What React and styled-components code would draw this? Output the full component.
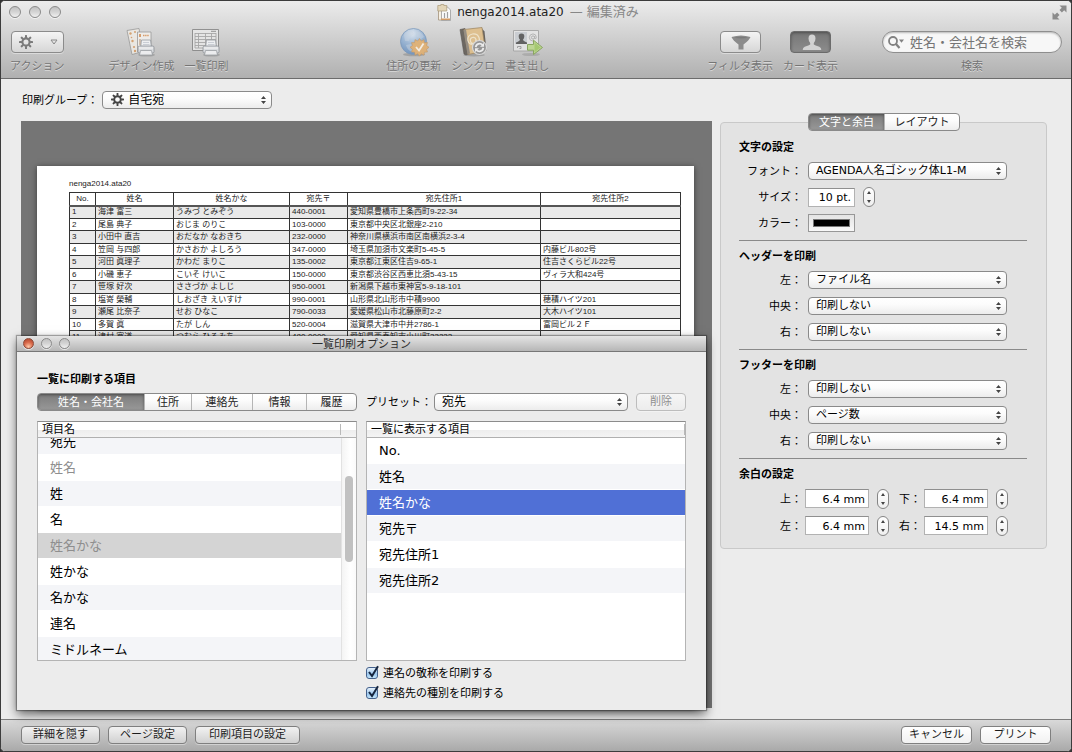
import React, { useLayoutEffect, useRef, useState } from "react";
import styled, { createGlobalStyle, css } from "styled-components";

const GlobalStyle = createGlobalStyle`
  *, *::before, *::after {
    box-sizing: border-box;
  }

  body {
    margin: 0;
    background: #333;
    color: #000;
    font-family: "DejaVu Sans", "Noto Sans CJK JP", sans-serif;
    font-size: 11px;
    line-height: 16px;
  }

  button, input, select {
    margin: 0;
    font-family: inherit;
    font-size: 11px;
    color: inherit;
  }
`;

const Window = styled.div`
  display: flex;
  flex-direction: column;
  min-height: 100vh;
  border: 1px solid #3c3c3c;
  border-radius: 5px;
  background: #ececec;
  overflow: hidden;
`;

/* ---------- header ---------- */

const Header = styled.header`
  background: linear-gradient(#ececec, #d4d4d4 40%, #b0b0b0);
  border-bottom: 1px solid #6c6c6c;
`;

const TitleBar = styled.div`
  display: grid;
  grid-template-columns: 1fr auto 1fr;
  align-items: center;
  height: 22px;
  padding: 0 4px 0 8px;
`;

const Lights = styled.div`
  display: flex;
  gap: ${props => (props.$small ? 7 : 8)}px;
`;

const Light = styled.button`
  width: ${props => (props.$small ? 11 : 12)}px;
  height: ${props => (props.$small ? 11 : 12)}px;
  padding: 0;
  border: 1px solid ${props => (props.$active ? "#8d4a38" : "#8a8a8a")};
  border-radius: 50%;
  background: ${props =>
    props.$active
      ? "radial-gradient(circle at 50% 85%, #ffc9a8, #d9694a 50%, #a8412a)"
      : "linear-gradient(#c2c2c2, #d4d4d4 50%, #f0f0f0)"};
  box-shadow: 0 1px 0 rgba(255, 255, 255, 0.6);
`;

const Title = styled.h1`
  display: flex;
  align-items: center;
  gap: 6px;
  margin: 0;
  font-size: 12px;
  font-weight: normal;
  color: #222;
`;

const Edited = styled.span`
  font-size: 13px;
  color: #878787;
`;

const FullScreen = styled.button`
  justify-self: end;
  display: flex;
  padding: 0;
  border: 0;
  background: none;
`;

const Toolbar = styled.div`
  display: flex;
  padding: 3px 9px 2px;
`;

const Tools = styled.div`
  display: flex;
  gap: 10px;
  margin-left: ${props => props.$indent || 0}px;
`;

const Spacer = styled.div`
  flex: 1;
`;

const Tool = styled.div`
  display: flex;
  flex-direction: column;
  align-items: center;
  color: #757575;
  text-shadow: 0 1px 0 rgba(255, 255, 255, 0.5);
`;

const ToolFace = styled.span`
  display: flex;
  align-items: center;
  height: 32px;
`;

const ToolText = styled.span`
  line-height: 18px;
  white-space: nowrap;
`;

const ToolAction = styled.button`
  display: flex;
  flex-direction: column;
  align-items: center;
  padding: 0;
  border: 0;
  background: none;
  text-shadow: inherit;
`;

const Bezel = styled.span`
  display: flex;
  align-items: center;
  justify-content: ${props => (props.$wide ? "space-between" : "center")};
  width: ${props => (props.$wide ? 53 : 41)}px;
  height: 22px;
  padding: 0 5px 0 7px;
  border: 1px solid ${props => (props.$pressed ? "#6b6b6b" : "#8b8b8b")};
  border-radius: 4px;
  background: ${props =>
    props.$pressed
      ? "linear-gradient(#767676, #8c8c8c)"
      : "linear-gradient(#f4f4f4, #d6d6d6)"};
  box-shadow: ${props =>
    props.$pressed
      ? "inset 0 1px 3px rgba(0, 0, 0, 0.35)"
      : "0 1px 0 rgba(255, 255, 255, 0.4)"};
`;

const SearchBox = styled.div`
  display: flex;
  align-items: center;
  width: 180px;
  height: 22px;
  padding-left: 5px;
  border: 1px solid #8e8e8e;
  border-radius: 11px;
  background: #f7f7f7;
  box-shadow: inset 0 1px 2px rgba(0, 0, 0, 0.25);
`;

const SearchInput = styled.input`
  flex: 1;
  min-width: 0;
  height: 20px;
  padding: 0 8px 0 6px;
  border: 0;
  outline: 0;
  background: none;
  font-size: 13px;

  &::placeholder {
    color: #757575;
    opacity: 1;
  }
`;

/* ---------- shared controls ---------- */

const PushButton = styled.button`
  flex: none;
  width: ${props => props.$width}px;
  height: 18px;
  padding: 0;
  border: 1px solid ${props => (props.disabled ? "#bdbdbd" : "#7f7f7f")};
  border-radius: 4px;
  background: ${props =>
    props.disabled
      ? "linear-gradient(#f6f6f6, #ececec)"
      : props.$metal
      ? "linear-gradient(#f2f2f2, #d0d0d0)"
      : "linear-gradient(#fff, #f1f1f1)"};
  line-height: 16px;
  color: ${props => (props.disabled ? "#8f8f8f" : "#1c1c1c")};
  box-shadow: 0 1px 0 rgba(255, 255, 255, 0.4);
`;

const SelectWrap = styled.span`
  position: relative;
  display: flex;
  flex: ${props => (props.$width ? "none" : 1)};
  width: ${props => (props.$width ? props.$width + "px" : "auto")};
`;

const SelectBox = styled.select`
  appearance: none;
  width: 100%;
  height: 18px;
  padding: 0 20px 0 ${props => (props.$icon ? 25 : 7)}px;
  border: 1px solid #8a8a8a;
  border-radius: 4px;
  background: linear-gradient(#fff, #fcfcfc 40%, #ececec);
  font-size: ${props => (props.$large ? 12 : 11)}px;
  line-height: 16px;
`;

const SelectArrows = styled.svg`
  position: absolute;
  right: 6px;
  top: 5px;
  pointer-events: none;
`;

const SelectIcon = styled.span`
  position: absolute;
  left: 9px;
  top: 2px;
  display: flex;
  pointer-events: none;
`;

const Segments = styled.div`
  display: flex;
  width: ${props => (props.$fit ? "max-content" : "auto")};
  height: 18px;
  border: 1px solid #8a8a8a;
  border-radius: 4px;
  background: linear-gradient(#fff, #fcfcfc 40%, #ededed);
  overflow: hidden;
`;

const Segment = styled.button`
  flex: ${props => props.$size} 1 ${props => props.$size}px;
  padding: 2px 0 0;
  border: 0;
  background: none;
  line-height: 14px;
  color: #222;

  & + & {
    border-left: 1px solid #b5b5b5;
  }

  ${props =>
    props.$on &&
    css`
      background: linear-gradient(#7c7c7c, #989898);
      box-shadow: inset 0 1px 3px rgba(0, 0, 0, 0.4);
      color: #fff;
    `}
`;

const TextField = styled.input`
  width: ${props => props.$width}px;
  height: 19px;
  padding: 1px 3px 0;
  border: 1px solid #b2b2b2;
  border-top-color: #8f8f8f;
  background: #fff;
  text-align: right;
`;

const StepperBox = styled.span`
  display: flex;
  flex-direction: column;
  width: 12px;
  height: 20px;
  margin-left: 8px;
  border: 1px solid #858585;
  border-radius: 6px;
  background: linear-gradient(#fff, #efefef);
`;

const StepButton = styled.button`
  display: flex;
  flex: 1;
  align-items: center;
  justify-content: center;
  padding: 0;
  border: 0;
  background: none;
`;

const Caption = styled.label`
  padding-top: 2px;
  white-space: nowrap;
`;

/* ---------- main area ---------- */

const Main = styled.main`
  display: flex;
  flex: 1;
  flex-direction: column;
  padding: 12px 24px 11px 20px;
`;

const GroupRow = styled.div`
  display: flex;
  align-items: center;
  gap: 4px;
  height: 18px;
  margin: 0 0 12px 1px;
`;

const Columns = styled.div`
  display: grid;
  flex: 1;
  grid-template-columns: minmax(0, 1fr) 327px;
  align-items: start;
  gap: 8px;
`;

const PreviewColumn = styled.div`
  position: relative;
  display: flex;
  align-self: stretch;
  min-height: 560px;
`;

const Preview = styled.div`
  display: flex;
  flex: 1;
  min-width: 0;
  padding: 45px 18px 0 16px;
  background: #757575;
`;

const Page = styled.section`
  flex: 1;
  min-width: 0;
  padding: 13px 13px 0 32px;
  background: #fff;
  box-shadow: 0 1px 6px rgba(0, 0, 0, 0.5);
  font-family: "Liberation Sans", "Noto Sans CJK JP", sans-serif;
  font-size: 8px;
  line-height: 10px;
  color: #222;
`;

const PageHead = styled.p`
  margin: 0 0 3px;
`;

const PageTable = styled.table`
  width: 100%;
  table-layout: fixed;
  border-collapse: collapse;

  th, td {
    height: 12px;
    padding: 0 2px;
    border: 1px solid #333;
    font-weight: normal;
    line-height: 10px;
    text-align: left;
    white-space: nowrap;
    overflow: hidden;
  }

  th {
    height: 13px;
    border-bottom: 2px solid #555;
    text-align: center;
  }

  tbody tr:nth-child(odd) td {
    height: 13px;
    background: #e9e9e9;
  }
`;

/* ---------- print option window ---------- */

const Dialog = styled.section`
  position: absolute;
  left: -4px;
  right: 6px;
  bottom: -2px;
  background: #ececec;
  box-shadow: 0 0 1px 1px rgba(0, 0, 0, 0.3), 0 4px 10px rgba(0, 0, 0, 0.6);
`;

const DialogBar = styled.div`
  display: grid;
  grid-template-columns: 1fr auto 1fr;
  align-items: center;
  height: 16px;
  padding: 0 6px;
  border-bottom: 1px solid #777;
  background: linear-gradient(#e4e4e4, #b6b6b6);
`;

const DialogTitle = styled.h2`
  margin: 0;
  padding-top: 2px;
  font-size: 11px;
  font-weight: normal;
  line-height: 13px;
  color: #2b2b2b;
`;

const DialogBody = styled.div`
  padding: 18px 20px 7px;
`;

const Heading = styled.h3`
  margin: 0;
  padding-top: 2px;
  font-size: 11px;
  font-weight: bold;
  line-height: ${props => (props.$tall ? 20 : 16)}px;
`;

const DialogColumns = styled.div`
  display: grid;
  grid-template-columns: 1fr 1fr;
  align-items: start;
  gap: 10px 9px;
  margin-top: 5px;
`;

const PresetRow = styled.div`
  display: flex;
  align-items: center;
  gap: 2px;
  height: 18px;

  button {
    margin-left: 6px;
  }
`;

const ListFrame = styled.div`
  height: 240px;
  border: 1px solid #b4b4b4;
  border-top-color: #8c8c8c;
  background: #fff;
`;

const ListHead = styled.div`
  display: flex;
  height: 16px;
  padding: 0 0 0 4px;
  border-bottom: 1px solid #b0b0b0;
  background: linear-gradient(#fff 50%, #ededed 50%, #f4f4f4);
  line-height: 16px;
`;

const HeadText = styled.span`
  flex: 1;
`;

const HeadEnd = styled.span`
  width: ${props => props.$width}px;
  margin: 2px 0;
  border-left: 1px solid #b9b9b9;
`;

const ListBody = styled.div`
  display: flex;
  height: 222px;
`;

const List = styled.ul`
  flex: 1;
  margin: 0;
  padding: 0;
  list-style: none;
  overflow: hidden;
`;

const Item = styled.li`
  height: 26px;
  padding-left: 12px;
  border-bottom: 1px solid transparent;
  background-clip: padding-box;
  font-size: 13px;
  line-height: 26px;
  color: ${props => (props.$dim ? "#8e8e8e" : "#000")};
  background-color: ${props => (props.$striped ? "#f4f5f8" : "#fff")};

  ${props =>
    props.$mark === "inactive" &&
    css`
      background-color: #d4d4d4;
    `}

  ${props =>
    props.$mark === "active" &&
    css`
      background-color: #5070d6;
      color: #fff;
    `}
`;

const ScrollTrack = styled.div`
  width: 15px;
  padding: 38px 3px 0;
  border-left: 1px solid #e2e2e2;
  background: linear-gradient(90deg, #f4f4f4, #fff 60%, #fafafa);
`;

const ScrollThumb = styled.div`
  width: 8px;
  height: 86px;
  border-radius: 4px;
  background: #c1c1c1;
`;

const Checks = styled.div`
  grid-column: 2;
  margin-top: -8px;
`;

const CheckLabel = styled.label`
  display: flex;
  align-items: center;
  gap: 5px;
  height: 20px;
`;

const CheckWrap = styled.span`
  position: relative;
  display: flex;
`;

const CheckInput = styled.input`
  appearance: none;
  width: 12px;
  height: 12px;
  border: 1px solid #44618c;
  border-radius: 3px;
  background: linear-gradient(#e6f1fb, #9cc7ee 60%, #c4e6fb);

  &:not(:checked) + svg {
    display: none;
  }
`;

const CheckMark = styled.svg`
  position: absolute;
  left: 1px;
  top: -2px;
  pointer-events: none;
`;

/* ---------- settings panel ---------- */

const Panel = styled.aside`
  margin-top: 1px;
  padding: 0 19px 9px 18px;
  border: 1px solid #c9c9c9;
  border-radius: 4px;
  background: #e3e3e3;
`;

const PanelTabs = styled.div`
  display: flex;
  justify-content: center;
  margin: -10px 0 5px;
  padding-left: 2px;
`;

const Divider = styled.hr`
  height: 1px;
  margin: 4px 0;
  border: 0;
  background: #8a8a8a;
`;

const Field = styled.div`
  display: flex;
  align-items: center;
  height: ${props => (props.$tall ? 27 : 26)}px;
`;

const FieldLabel = styled(Caption)`
  width: ${props => (props.$second ? 32 : 63)}px;
  margin-right: ${props => (props.$tight ? 3 : 6)}px;
  text-align: right;
`;

const ColorWell = styled.input`
  appearance: none;
  width: 47px;
  height: 18px;
  padding: 4px;
  border: 1px solid #979797;
  background: linear-gradient(#e4e4e4, #f8f8f8);

  &::-webkit-color-swatch-wrapper {
    padding: 0;
  }

  &::-webkit-color-swatch {
    border: 1px solid #777;
    border-radius: 0;
  }
`;

/* ---------- footer ---------- */

const Footer = styled.footer`
  display: flex;
  gap: 8px;
  height: 32px;
  padding: 6px 20px 0;
  border-top: 1px solid #7d7d7d;
  background: linear-gradient(#d9d9d9, #a9a9a9);
`;

/* ---------- icons ---------- */

const PictureIcon = styled.svg`
  opacity: 0.85;
`;

const Gear = ({ size, color }) => (
  <svg width={size} height={size} viewBox="0 0 14 14" aria-hidden="true">
    {[0, 45, 90, 135].map(angle => (
      <g key={angle} fill={color} transform={`rotate(${angle} 7 7)`}>
        <rect x="6" y="0" width="2" height="3" rx="0.6" />
        <rect x="6" y="11" width="2" height="3" rx="0.6" />
      </g>
    ))}
    <circle cx="7" cy="7" r="3.6" fill="none" stroke={color} strokeWidth="2.1" />
  </svg>
);

const Printer = () => (
  <g>
    <ellipse cx="20.5" cy="27" rx="8.5" ry="1.6" fill="#777" opacity="0.45" />
    <path d="M15.5 12h9l1 8h-11z" fill="#f4f6f8" stroke="#8d9298" strokeWidth="0.8" />
    <path d="M17 14.5h6M17 16.5h6.5" stroke="#b7bfc8" strokeWidth="0.7" />
    <path d="M12 19.5q0-1.5 1.5-1.5h13q1.5 0 1.5 1.5v4q0 1.5-1.5 1.5h-13q-1.5 0-1.5-1.5z" fill="#dde0e4" stroke="#83888e" strokeWidth="0.8" />
    <path d="M13 20h14" stroke="#fff" strokeWidth="1" />
    <path d="M14.5 22.500h11l1 4.500h-13z" fill="#f3f4f6" stroke="#92979c" strokeWidth="0.8" />
  </g>
);

const DesignIcon = () => (
  <PictureIcon width="30" height="29" viewBox="0 0 30 29" aria-hidden="true">
    <path d="M1 2.5l12-2 4 23-11 3z" fill="#efece6" stroke="#8f8f8f" strokeWidth="0.8" />
    <g fill="#d59a63">
      <circle cx="4.5" cy="5.5" r="1.2" />
      <circle cx="9" cy="4" r="1" />
      <circle cx="6.5" cy="13" r="1.2" />
      <circle cx="8" cy="19" r="1.1" />
      <circle cx="9" cy="23" r="1.2" />
      <circle cx="5.5" cy="9.5" r="0.8" />
    </g>
    <path d="M11.5 4h13.500v20h-13.500z" fill="#f4f2ee" stroke="#8f8f8f" strokeWidth="0.8" />
    <rect x="13" y="6" width="2" height="3" fill="#d9955c" />
    <path d="M17 7.5h6" stroke="#d9955c" strokeWidth="1.5" strokeDasharray="1.5 0.6" />
    <path d="M14 11v6" stroke="#c6a98d" strokeWidth="1.5" />
    <Printer />
  </PictureIcon>
);

const SheetIcon = () => (
  <PictureIcon width="30" height="29" viewBox="0 0 30 29" aria-hidden="true">
    <path d="M1.5 1.500h26v21h-26z" fill="#e9e9e9" stroke="#858585" />
    <path d="M4 5.500h21M4 8.500h21M4 11.500h21M4 14.500h21M4 17.500h21M4 20h21" stroke="#a0a0a0" strokeWidth="0.9" />
    <path d="M4 5v15M7.500 5v15M14.500 5v15M20.500 5v15M25 5v15" stroke="#a0a0a0" strokeWidth="0.9" />
    <path d="M20 3.300h5" stroke="#888" strokeWidth="1" />
    <Printer />
  </PictureIcon>
);

const GlobeIcon = () => (
  <PictureIcon width="30" height="30" viewBox="0 0 30 30" aria-hidden="true">
    <defs>
      <radialGradient id="globe" cx="0.45" cy="0.2" r="0.85">
        <stop offset="0" stopColor="#dfe9f4" />
        <stop offset="0.45" stopColor="#98b5d6" />
        <stop offset="1" stopColor="#5f89bb" />
      </radialGradient>
    </defs>
    <ellipse cx="15" cy="27.5" rx="11" ry="1.8" fill="#777" opacity="0.5" />
    <circle cx="14.5" cy="14.5" r="13" fill="url(#globe)" stroke="#6e91b8" strokeWidth="0.8" />
    <path d="M5 8q3-5 8-4l2 3-4 3-1 4-4 0zM17 4q6 1 8 6l-3 2-4-2zM7 18l5-1 3 3-2 5q-5-2-6-7z" fill="#c5d4e4" opacity="0.5" />
    <polygon
      points="20.5,11.5 22.3,14 25,12.6 25.4,15.6 28.5,15.6 27.6,18.5 30,20.3 27.6,22.2 28.5,25 25.4,25.2 25,28.2 22.3,26.8 20.5,29.2 18.7,26.8 16,28.2 15.6,25.2 12.5,25 13.4,22.2 11,20.3 13.4,18.5 12.5,15.6 15.6,15.6 16,12.6 18.7,14"
      fill="#e2ae6c"
      stroke="#b98a55"
      strokeWidth="0.5"
    />
    <path d="M17 20l3 3.500 4.500-7" fill="none" stroke="#fbf3e6" strokeWidth="1.8" />
  </PictureIcon>
);

const BookIcon = () => (
  <PictureIcon width="30" height="30" viewBox="0 0 30 30" aria-hidden="true">
    <ellipse cx="16" cy="28" rx="11" ry="1.5" fill="#777" opacity="0.5" />
    <path d="M2 2.500l5-1 5 24.500-4 2-2-1z" fill="#5d5750" stroke="#47423d" strokeWidth="0.6" />
    <path d="M24 1.500l2.500 3 2 19-2 1z" fill="#55504b" />
    <path d="M6 2.500l18-2 3.500 23.500-17.500 3.500z" fill="#e0bd85" stroke="#8f7449" strokeWidth="0.7" />
    <path d="M5.500 3l2.500-.5 4 24-2.500.8z" fill="#8c8377" />
    <path d="M17.800 12.700a2.800 3 0 1 1-3.400-2.200q3-.6 3.500 2l.4 1.800q.5 1.500 1.800 1 2-1.200 1-4.500-1.600-4.500-6.600-3.800-5.400 1.300-4.600 6.300.9 4 4.700 4" fill="none" stroke="#f4e7ca" strokeWidth="1.2" />
    <circle cx="21.5" cy="20.5" r="7" fill="#8e8e8e" stroke="#dcdcdc" strokeWidth="1.2" />
    <path d="M17.700 20.200a4 4 0 0 1 7-2.200M25.300 20.800a4 4 0 0 1-7 2.200" fill="none" stroke="#f2f2f2" strokeWidth="1.8" />
    <path d="M26 15.800v4h-4zM17 25.200v-4h4z" fill="#f2f2f2" />
  </PictureIcon>
);

const ExportIcon = () => (
  <PictureIcon width="32" height="30" viewBox="0 0 32 30" aria-hidden="true">
    <ellipse cx="20" cy="27.5" rx="9" ry="1.6" fill="#777" opacity="0.35" />
    <path d="M2.5 3.500h25v20.500h-25z" fill="#e6e6e6" stroke="#a2a2a2" />
    <rect x="4" y="5" width="12" height="12" fill="#c9cdd2" />
    <path d="M10.500 6.500q3 0 2.800 3.300-.3 2-1.300 3 0 1.200 4 2.700v1.500h-11v-1.500q4-1.500 4-2.700-1.200-1-1.300-3-.2-3.300 2.800-3.300z" fill="#505050" />
    <circle cx="22" cy="10.5" r="1.6" fill="none" stroke="#aaa" />
    <path d="M23.700 9v2.500q1.600.8 1.700-1-.2-3.500-3.400-3.600-3.600.2-3.700 3.700.3 3.300 3.700 3.500" fill="none" stroke="#aaa" strokeWidth="0.9" />
    <path d="M6.500 21v-1.500h3.500v2h-1.500" fill="none" stroke="#999" />
    <path d="M16.500 17.500h6v-4.300l9 7.300-9 7v-4.300h-6z" fill="#bcd98a" stroke="#7fa04f" />
    <path d="M23.500 15.500l6 5-6 4.700z" fill="#98c558" opacity="0.8" />
  </PictureIcon>
);

const FunnelIcon = () => (
  <svg width="20" height="15" viewBox="0 0 20 15" aria-hidden="true">
    <path d="M.5 2q9.500-3 19 0-1.500 3.500-7 7.500v5h-5v-5q-5.500-4-7-7.500z" fill="#8b8b8b" />
    <path d="M3 2.700q7-1.800 14 0-7 1.400-14 0z" fill="#7a7a7a" />
  </svg>
);

const PersonIcon = () => (
  <svg width="20" height="17" viewBox="0 0 20 17" aria-hidden="true">
    <path d="M10 .5q3.500 0 3.500 4 0 2.500-1.700 4.500v1.500q1 1 5.500 2.300 2 .7 2 3.200h-18.600q0-2.500 2-3.200 4.500-1.300 5.500-2.300v-1.500q-1.700-2-1.700-4.500 0-4 3.500-4z" fill="#d2d2d2" />
  </svg>
);

const DocIcon = () => (
  <svg width="14" height="17" viewBox="0 0 14 17" aria-hidden="true">
    <path d="M1.500 5.500h8.500v10.500h-8.500z" fill="#f6efe2" stroke="#a3927b" strokeWidth="0.8" />
    <path d="M4.500 3h6l3 3v10.500h-9z" fill="#fbfbfb" stroke="#9b9b9b" strokeWidth="0.8" />
    <path d="M.8 1.500h3v-1h3v1h3v5.500h-9z" fill="#e3d6b8" stroke="#a79877" strokeWidth="0.7" />
    <path d="M7.500 9v5M10.500 8v6" stroke="#a0a0a0" strokeWidth="1.2" />
    <path d="M4 15.200h9" stroke="#d39c66" strokeWidth="1.6" />
  </svg>
);

const ExpandIcon = () => (
  <svg width="15" height="15" viewBox="0 0 15 15" aria-hidden="true">
    <path d="M7.500.5h7v7l-2.300-2.300-2.300 2.300-2.400-2.400 2.300-2.300z" fill="#8b8b8b" />
    <path d="M7.500 14.500h-7v-7l2.300 2.300 2.300-2.300 2.400 2.400-2.300 2.300z" fill="#8b8b8b" />
  </svg>
);

const SearchIcon = () => (
  <svg width="16" height="14" viewBox="0 0 16 14" aria-hidden="true">
    <circle cx="5" cy="6" r="4" fill="none" stroke="#828282" strokeWidth="1.8" />
    <path d="M8 9l3.500 4" stroke="#828282" strokeWidth="2.2" />
    <path d="M11 4.500h5l-2.500 3.200z" fill="#828282" />
  </svg>
);

/* ---------- composed controls ---------- */

const PopUp = ({ id, value, options, width, large, icon }) => {
  const [current, setCurrent] = useState(value);
  return (
    <SelectWrap $width={width}>
      {icon && <SelectIcon>{icon}</SelectIcon>}
      <SelectBox
        id={id}
        value={current}
        onChange={e => setCurrent(e.target.value)}
        $large={large}
        $icon={Boolean(icon)}
      >
        {(options || [value]).map(option => (
          <option key={option}>{option}</option>
        ))}
      </SelectBox>
      <SelectArrows width="5" height="8" viewBox="0 0 5 8">
        <path d="M0 3l2.500-3L5 3zM0 5l2.500 3L5 5z" fill="#444" />
      </SelectArrows>
    </SelectWrap>
  );
};

const Stepper = ({ name }) => (
  <StepperBox>
    <StepButton aria-label={name + "を増やす"}>
      <svg width="4" height="3" viewBox="0 0 4 3">
        <path d="M0 3l2-3 2 3z" fill="#444" />
      </svg>
    </StepButton>
    <StepButton aria-label={name + "を減らす"}>
      <svg width="4" height="3" viewBox="0 0 4 3">
        <path d="M0 0l2 3 2-3z" fill="#444" />
      </svg>
    </StepButton>
  </StepperBox>
);

const SegmentedControl = ({ items, fit }) => {
  const [active, setActive] = useState(items[0].label);
  return (
    <Segments $fit={fit}>
      {items.map(item => (
        <Segment
          key={item.label}
          $size={item.size}
          $on={item.label === active}
          style={fit ? { width: item.size } : undefined}
          onClick={() => setActive(item.label)}
        >
          {item.label}
        </Segment>
      ))}
    </Segments>
  );
};

const CheckBox = ({ id, children }) => (
  <CheckLabel as="div">
    <CheckWrap>
      <CheckInput id={id} type="checkbox" defaultChecked />
      <CheckMark width="12" height="13" viewBox="0 0 12 13">
        <path d="M2 7l3 4L11 1.200" fill="none" stroke="#16263f" strokeWidth="2" />
      </CheckMark>
    </CheckWrap>
    <Caption htmlFor={id}>{children}</Caption>
  </CheckLabel>
);

const PictureTool = ({ icon, children }) => (
  <Tool>
    <ToolAction>
      <ToolFace>{icon}</ToolFace>
      <ToolText>{children}</ToolText>
    </ToolAction>
  </Tool>
);

/* ---------- data ---------- */

const people = [
  ["1", "海津 富三", "うみづ とみぞう", "440-0001", "愛知県豊橋市上条西町9-22-34", ""],
  ["2", "尾島 典子", "おじま のりこ", "103-0000", "東京都中央区北銀座2-210", ""],
  ["3", "小田中 直吉", "おだなか なおきち", "232-0000", "神奈川県横浜市南区南横浜2-3-4", ""],
  ["4", "笠岡 与四郎", "かさおか よしろう", "347-0000", "埼玉県加須市文楽町5-45-5", "内藤ビル802号"],
  ["5", "河田 眞理子", "かわだ まりこ", "135-0002", "東京都江東区住吉9-65-1", "住吉さくらビル22号"],
  ["6", "小磯 恵子", "こいそ けいこ", "150-0000", "東京都渋谷区西恵比須5-43-15", "ヴィラ大和424号"],
  ["7", "笹塚 好次", "ささづか よしじ", "950-0001", "新潟県下越市東神宮5-9-18-101", ""],
  ["8", "塩嵜 榮輔", "しおざき えいすけ", "990-0001", "山形県北山形市中積9900", "穂積ハイツ201"],
  ["9", "瀬尾 比奈子", "せお ひなこ", "790-0033", "愛媛県松山市北藤原町2-2", "大木ハイツ101"],
  ["10", "多賀 眞", "たが しん", "520-0004", "滋賀県大津市中井2786-1", "富岡ビル２Ｆ"],
  ["11", "津村 寛道", "つむら ひろみち", "480-0000", "愛知県西春知市小川町33222", ""]
];

const columns = [
  { name: "No.", width: 26 },
  { name: "姓名", width: 78 },
  { name: "姓名かな", width: 116 },
  { name: "宛先〒", width: 58 },
  { name: "宛先住所1", width: 193 },
  { name: "宛先住所2" }
];

const sourceItems = [
  { text: "宛先" },
  { text: "姓名", dim: true },
  { text: "姓" },
  { text: "名" },
  { text: "姓名かな", dim: true, mark: "inactive" },
  { text: "姓かな" },
  { text: "名かな" },
  { text: "連名" },
  { text: "ミドルネーム" }
];

const shownItems = ["No.", "姓名", "姓名かな", "宛先〒", "宛先住所1", "宛先住所2"];

const printValues = ["印刷しない", "ファイル名", "ページ数"];

const Col = styled.col`
  width: ${props => (props.$width ? props.$width + "px" : "auto")};
`;

const AddressPage = () => (
  <Page>
    <PageHead>nenga2014.ata20</PageHead>
    <PageTable>
      <colgroup>
        {columns.map(column => (
          <Col key={column.name} $width={column.width} />
        ))}
      </colgroup>
      <thead>
        <tr>
          {columns.map(column => (
            <th key={column.name}>{column.name}</th>
          ))}
        </tr>
      </thead>
      <tbody>
        {people.map(person => (
          <tr key={person[0]}>
            {person.map((cell, i) => (
              <td key={i}>{cell}</td>
            ))}
          </tr>
        ))}
      </tbody>
    </PageTable>
  </Page>
);

const PrintOptions = () => {
  const list = useRef(null);
  const [selected, setSelected] = useState("姓名かな");

  useLayoutEffect(() => {
    list.current.scrollTop = 9;
  }, []);

  return (
    <Dialog>
      <DialogBar>
        <Lights $small>
          <Light $small $active aria-label="閉じる" />
          <Light $small aria-label="しまう" />
          <Light $small aria-label="拡大" />
        </Lights>
        <DialogTitle>一覧印刷オプション</DialogTitle>
      </DialogBar>
      <DialogBody>
        <Heading>一覧に印刷する項目</Heading>
        <DialogColumns>
          <SegmentedControl
            items={[
              { label: "姓名・会社名", size: 106 },
              { label: "住所", size: 47 },
              { label: "連絡先", size: 61 },
              { label: "情報", size: 54 },
              { label: "履歴", size: 50 }
            ]}
          />
          <PresetRow>
            <Caption htmlFor="preset">プリセット：</Caption>
            <PopUp id="preset" value="宛先" large />
            <PushButton $width={50} disabled>
              削除
            </PushButton>
          </PresetRow>
          <ListFrame>
            <ListHead>
              <HeadText>項目名</HeadText>
              <HeadEnd $width={16} />
            </ListHead>
            <ListBody>
              <List ref={list}>
                {sourceItems.map((item, i) => (
                  <Item key={item.text} $striped={i % 2 === 0} $dim={item.dim} $mark={item.mark}>
                    {item.text}
                  </Item>
                ))}
              </List>
              <ScrollTrack>
                <ScrollThumb />
              </ScrollTrack>
            </ListBody>
          </ListFrame>
          <ListFrame>
            <ListHead>
              <HeadText>一覧に表示する項目</HeadText>
              <HeadEnd $width={1} />
            </ListHead>
            <ListBody>
              <List>
                {shownItems.map((text, i) => (
                  <Item
                    key={text}
                    $striped={i % 2 === 1}
                    $mark={text === selected ? "active" : undefined}
                    onClick={() => setSelected(text)}
                  >
                    {text}
                  </Item>
                ))}
              </List>
            </ListBody>
          </ListFrame>
          <Checks>
            <CheckBox id="honorific">連名の敬称を印刷する</CheckBox>
            <CheckBox id="contactType">連絡先の種別を印刷する</CheckBox>
          </Checks>
        </DialogColumns>
      </DialogBody>
    </Dialog>
  );
};

const PlaceRows = ({ prefix, values }) =>
  ["左", "中央", "右"].map((place, i) => (
    <Field key={place}>
      <FieldLabel htmlFor={prefix + i}>{place}：</FieldLabel>
      <PopUp id={prefix + i} value={values[i]} options={printValues} width={199} />
    </Field>
  ));

const MarginRow = ({ items }) => (
  <Field $tall>
    {items.map((item, i) => (
      <React.Fragment key={item.id}>
        <FieldLabel htmlFor={item.id} $tight $second={i > 0}>
          {item.label}：
        </FieldLabel>
        <TextField id={item.id} $width={64} defaultValue={item.value} />
        <Stepper name={item.label} />
      </React.Fragment>
    ))}
  </Field>
);

const Settings = () => (
  <Panel>
    <PanelTabs>
      <SegmentedControl
        fit
        items={[
          { label: "文字と余白", size: 75 },
          { label: "レイアウト", size: 75 }
        ]}
      />
    </PanelTabs>
    <Heading $tall>文字の設定</Heading>
    <Field>
      <FieldLabel htmlFor="font">フォント：</FieldLabel>
      <PopUp id="font" value="AGENDA人名ゴシック体L1-M" width={199} />
    </Field>
    <Field>
      <FieldLabel htmlFor="size">サイズ：</FieldLabel>
      <TextField id="size" $width={47} defaultValue="10 pt." />
      <Stepper name="サイズ" />
    </Field>
    <Field>
      <FieldLabel htmlFor="color">カラー：</FieldLabel>
      <ColorWell id="color" type="color" defaultValue="#000000" />
    </Field>
    <Divider />
    <Heading $tall>ヘッダーを印刷</Heading>
    <PlaceRows prefix="header" values={["ファイル名", "印刷しない", "印刷しない"]} />
    <Divider />
    <Heading $tall>フッターを印刷</Heading>
    <PlaceRows prefix="footer" values={["印刷しない", "ページ数", "印刷しない"]} />
    <Divider />
    <Heading $tall>余白の設定</Heading>
    <MarginRow
      items={[
        { id: "top", label: "上", value: "6.4 mm" },
        { id: "bottom", label: "下", value: "6.4 mm" }
      ]}
    />
    <MarginRow
      items={[
        { id: "left", label: "左", value: "6.4 mm" },
        { id: "right", label: "右", value: "14.5 mm" }
      ]}
    />
  </Panel>
);

const App = () => (
  <Window>
    <GlobalStyle />
    <Header>
      <TitleBar>
        <Lights>
          <Light aria-label="閉じる" />
          <Light aria-label="しまう" />
          <Light aria-label="拡大" />
        </Lights>
        <Title>
          <DocIcon />
          nenga2014.ata20
          <Edited>— 編集済み</Edited>
        </Title>
        <FullScreen aria-label="フルスクリーン">
          <ExpandIcon />
        </FullScreen>
      </TitleBar>
      <Toolbar>
        <Tools>
          <PictureTool
            icon={
              <Bezel $wide>
                <Gear size={14} color="#7b7b7b" />
                <svg width="8" height="6" viewBox="0 0 8 6">
                  <path d="M1 1h6L4 5z" fill="none" stroke="#888" />
                </svg>
              </Bezel>
            }
          >
            アクション
          </PictureTool>
        </Tools>
        <Tools $indent={44}>
          <PictureTool icon={<DesignIcon />}>デザイン作成</PictureTool>
          <PictureTool icon={<SheetIcon />}>一覧印刷</PictureTool>
        </Tools>
        <Spacer />
        <Tools>
          <PictureTool icon={<GlobeIcon />}>住所の更新</PictureTool>
          <PictureTool icon={<BookIcon />}>シンクロ</PictureTool>
          <PictureTool icon={<ExportIcon />}>書き出し</PictureTool>
        </Tools>
        <Spacer />
        <Tools>
          <PictureTool
            icon={
              <Bezel>
                <FunnelIcon />
              </Bezel>
            }
          >
            フィルタ表示
          </PictureTool>
          <PictureTool
            icon={
              <Bezel $pressed>
                <PersonIcon />
              </Bezel>
            }
          >
            カード表示
          </PictureTool>
        </Tools>
        <Tools $indent={44}>
          <Tool>
            <ToolFace>
              <SearchBox>
                <SearchIcon />
                <SearchInput id="search" placeholder="姓名・会社名を検索" />
              </SearchBox>
            </ToolFace>
            <ToolText as="label" htmlFor="search">
              検索
            </ToolText>
          </Tool>
        </Tools>
      </Toolbar>
    </Header>
    <Main>
      <GroupRow>
        <Caption htmlFor="group">印刷グループ：</Caption>
        <PopUp id="group" value="自宅宛" width={170} large icon={<Gear size={13} color="#444" />} />
      </GroupRow>
      <Columns>
        <PreviewColumn>
          <Preview>
            <AddressPage />
          </Preview>
          <PrintOptions />
        </PreviewColumn>
        <Settings />
      </Columns>
    </Main>
    <Footer>
      <PushButton $width={79} $metal>詳細を隠す</PushButton>
      <PushButton $width={79} $metal>ページ設定</PushButton>
      <PushButton $width={105} $metal>印刷項目の設定</PushButton>
      <Spacer />
      <PushButton $width={71}>キャンセル</PushButton>
      <PushButton $width={71}>プリント</PushButton>
    </Footer>
  </Window>
);

export default App;
